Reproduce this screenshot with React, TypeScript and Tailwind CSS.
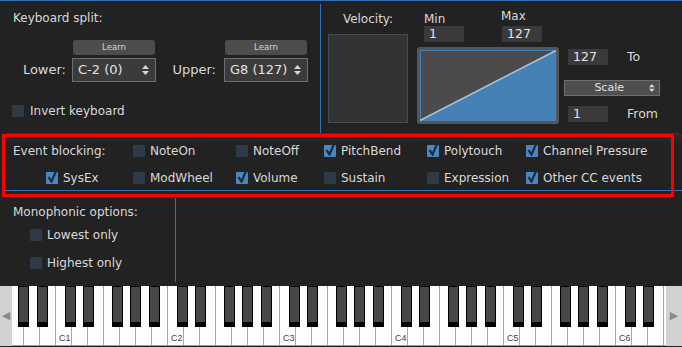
import React from 'react';

const Box: React.FC<{ on?: boolean }> = ({ on }) =>
  on ? (
    <span className="relative w-[12px] h-[12px] shrink-0 rounded-[1px] bg-[#4a86c0]">
      <svg className="absolute -top-[3px] left-[1px]" width="11" height="14" viewBox="0 0 11 14">
        <path d="M1.5 8 L4.5 12.5 L9.5 1" stroke="#1c2b3b" strokeWidth="2.2" fill="none" />
      </svg>
    </span>
  ) : (
    <span className="w-[12px] h-[12px] shrink-0 rounded-[1px] bg-[#2e3a48]" />
  );

const Check: React.FC<{ on?: boolean; label: string; className?: string }> = ({ on, label, className = '' }) => (
  <div className={`flex items-center gap-[5px] h-[14px] ${className}`}>
    <Box on={on} />
    <span className="leading-[14px] whitespace-nowrap">{label}</span>
  </div>
);

const Arrows: React.FC<{ size?: number }> = ({ size = 10 }) => (
  <svg width={size * 0.7} height={size} viewBox="0 0 7 10">
    <path d="M3.5 0 L7 4 L0 4 Z M3.5 10 L7 6 L0 6 Z" fill="#d8d8d8" />
  </svg>
);

const Select: React.FC<{ value: string }> = ({ value }) => (
  <div className="h-[24px] w-[84px] bg-[#3b3b3b] border border-[#6e6e6e] flex items-center justify-between pl-[5px] pr-[6px] text-[13px] text-[#e2e2e2]">
    <span>{value}</span>
    <Arrows />
  </div>
);

const Learn = () => (
  <div className="h-[15px] mx-[1px] rounded-[3px] bg-[#4d4d4d] flex items-center justify-center text-[8.5px] text-[#d4d4d4]">Learn</div>
);

const Field: React.FC<{ value: string }> = ({ value }) => (
  <div className="h-[16px] w-[40px] bg-[#3a3a3a] pl-[5px] text-[12.5px] leading-[16px] text-[#e2e2e2]">{value}</div>
);

const NOTES = ['G', 'A', 'B', 'C', 'D', 'E', 'F'];
const BLACK_OFF: Record<string, number> = { C: 9, D: 11, F: 8, G: 10, A: 13 };

const Keyboard = () => {
  const whites = Array.from({ length: 42 }, (_, i) => {
    const n = NOTES[i % 7];
    return { n, label: n === 'C' ? `C${Math.floor((i - 3) / 7) + 1}` : '', x: -4 + 16 * i };
  });
  return (
    <div className="flex h-[60px] bg-[#d2d2d2]">
      <div className="w-[12px] flex items-center justify-center text-[#8a8a8a] text-[11px]">◀</div>
      <div className="relative w-[654px] overflow-hidden border-b border-[#9a9a9a]">
        <div className="flex h-full -ml-[4px]">
          {whites.map((w, i) => (
            <div key={i} className="relative w-[16px] h-full shrink-0 bg-[#fdfdfd] border-r border-[#a8a8a8]">
              {w.label && (
                <span className="absolute left-[3px] bottom-[2px] text-[9px] leading-[10px] text-[#444] font-['Liberation_Sans',sans-serif]">
                  {w.label}
                </span>
              )}
            </div>
          ))}
        </div>
        {whites
          .filter((w) => BLACK_OFF[w.n] !== undefined)
          .map((w, i) => (
            <div
              key={i}
              className="absolute top-0 w-[11px] h-[41px] bg-[#474747] border border-black border-b-[5px]"
              style={{ left: w.x + BLACK_OFF[w.n] }}
            />
          ))}
      </div>
      <div className="flex-1 flex items-center justify-center text-[#8a8a8a] text-[11px]">▶</div>
    </div>
  );
};

export default function App() {
  return (
    <div className="relative w-[682px] h-[347px] overflow-hidden bg-[#222222] text-[#d9d9d9] text-[12px] font-['DejaVu_Sans',sans-serif] border-t border-[#2f74b8]">
      {/* Top: keyboard split + velocity */}
      <div className="flex h-[132px]">
        <div className="w-[320px] pt-[10px]">
          <div className="pl-[13px] leading-[14px]">Keyboard split:</div>
          <div className="flex mt-[15px]">
            <div className="w-[66px] flex flex-col justify-end">
              <div className="h-[24px] text-right leading-[24px] text-[13px]">Lower:</div>
            </div>
            <div className="w-[84px] ml-[6px]">
              <Learn />
              <div className="mt-[3px]">
                <Select value="C-2 (0)" />
              </div>
            </div>
            <div className="w-[60px] flex flex-col justify-end">
              <div className="h-[24px] text-right leading-[24px] text-[13px]">Upper:</div>
            </div>
            <div className="w-[84px] ml-[8px]">
              <Learn />
              <div className="mt-[3px]">
                <Select value="G8 (127)" />
              </div>
            </div>
          </div>
          <div className="flex items-center gap-[6px] pl-[12px] mt-[22px] h-[14px]">
            <Box />
            <span className="leading-[14px]">Invert keyboard</span>
          </div>
        </div>
        <div className="w-px bg-[#2f74b8] mt-[3px]" />
        <div className="flex">
          <div className="ml-[7px] w-[80px] pt-[11px]">
            <div className="text-center leading-[14px]">Velocity:</div>
            <div className="mt-[8px] h-[89px] bg-[#333333] border border-[#454c54]" />
          </div>
          <div className="ml-[9px] w-[142px]">
            <div className="flex h-[41px]">
              <div className="ml-[7px] w-[40px] pt-[11px]">
                <div className="leading-[14px]">Min</div>
                <Field value="1" />
              </div>
              <div className="ml-[38px] w-[40px] pt-[8px]">
                <div className="leading-[14px] -ml-[1px]">Max</div>
                <div className="mt-[3px]">
                  <Field value="127" />
                </div>
              </div>
            </div>
            <div className="mt-[5px] h-[77px] rounded-[3px] border-[3px] border-[#565656] bg-[#565656]">
              <svg width="136" height="71" viewBox="0 0 136 71" className="block">
                <rect x="0" y="0" width="136" height="71" fill="#4b4b4b" />
                <path d="M0 71 L136 0 L136 71 Z" fill="#4580b6" />
                <path d="M0.5 71 L0.5 0.5 L136 0.5" stroke="#3d80c4" strokeWidth="1" fill="none" />
                <path d="M0 70.5 L136 0.5" stroke="#a9c1d6" strokeWidth="1.6" />
              </svg>
            </div>
          </div>
          <div className="ml-[5px] w-[96px] pt-[48px]">
            <div className="flex items-center h-[16px]">
              <div className="ml-[4px]">
                <Field value="127" />
              </div>
              <span className="ml-[19px] text-[12.5px]">To</span>
            </div>
            <div className="mt-[15px] h-[16px] bg-[#4f4f4f] border border-[#6e6e6e] flex items-center pr-[4px]">
              <span className="flex-1 text-center text-[11px] leading-[14px] text-[#e2e2e2] pl-[4px]">Scale</span>
              <Arrows size={8} />
            </div>
            <div className="flex items-center h-[16px] mt-[10px]">
              <div className="ml-[4px]">
                <Field value="1" />
              </div>
              <span className="ml-[19px] text-[12.5px]">From</span>
            </div>
          </div>
        </div>
      </div>

      {/* Event blocking */}
      <div className="h-[58px] ml-[5px] pt-[10px] border-b border-[#2f74b8] rounded-tr-[4px] border-t border-t-[#383838] bg-gradient-to-b from-[#2c2c2c] to-[#222222] to-[20%]">
        <div className="grid grid-cols-[33px_87px_103px_88px_103px_99px_1fr] gap-y-[13px] pl-[8px]">
          <div className="col-span-2 leading-[14px]">Event blocking:</div>
          <Check label="NoteOn" />
          <Check label="NoteOff" />
          <Check on label="PitchBend" />
          <Check on label="Polytouch" />
          <Check on label="Channel Pressure" />
          <div />
          <Check on label="SysEx" />
          <Check label="ModWheel" />
          <Check on label="Volume" />
          <Check label="Sustain" />
          <Check label="Expression" />
          <Check on label="Other CC events" />
        </div>
      </div>

      {/* Monophonic */}
      <div className="flex h-[95px]">
        <div className="w-[175px] pt-[14px]">
          <div className="pl-[13px] leading-[14px]">Monophonic options:</div>
          <Check label="Lowest only" className="ml-[30px] mt-[9px]" />
          <Check label="Highest only" className="ml-[30px] mt-[14px]" />
        </div>
        <div className="w-px bg-[#2f74b8] mt-[7px] h-[84px]" />
      </div>

      <Keyboard />

      {/* highlight frame */}
      <div className="absolute left-[2px] top-[133px] w-[672px] h-[63px] border-[3px] border-[#ff0000] pointer-events-none" />
    </div>
  );
}
